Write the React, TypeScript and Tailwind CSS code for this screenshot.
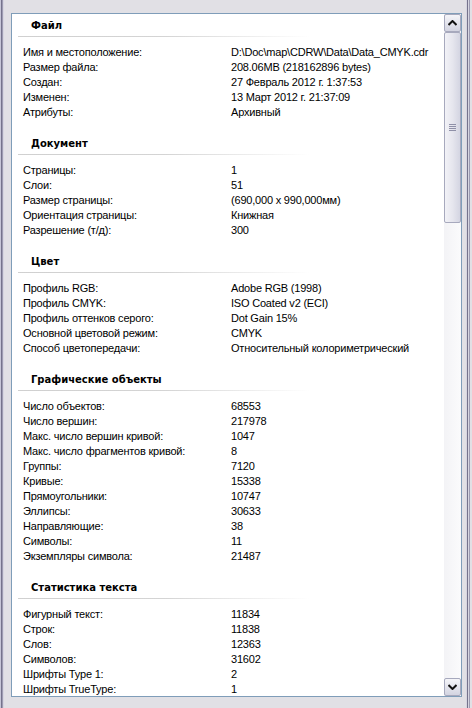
import React from "react";

type Section = { title: string; rows: [string, string][] };

const sections: Section[] = [
  {
    title: "Файл",
    rows: [
      ["Имя и местоположение:", "D:\\Doc\\map\\CDRW\\Data\\Data_CMYK.cdr"],
      ["Размер файла:", "208.06MB (218162896 bytes)"],
      ["Создан:", "27 Февраль 2012 г. 1:37:53"],
      ["Изменен:", "13 Март 2012 г. 21:37:09"],
      ["Атрибуты:", "Архивный"],
    ],
  },
  {
    title: "Документ",
    rows: [
      ["Страницы:", "1"],
      ["Слои:", "51"],
      ["Размер страницы:", "(690,000 x 990,000мм)"],
      ["Ориентация страницы:", "Книжная"],
      ["Разрешение (т/д):", "300"],
    ],
  },
  {
    title: "Цвет",
    rows: [
      ["Профиль RGB:", "Adobe RGB (1998)"],
      ["Профиль CMYK:", "ISO Coated v2 (ECI)"],
      ["Профиль оттенков серого:", "Dot Gain 15%"],
      ["Основной цветовой режим:", "CMYK"],
      ["Способ цветопередачи:", "Относительный колориметрический"],
    ],
  },
  {
    title: "Графические объекты",
    rows: [
      ["Число объектов:", "68553"],
      ["Число вершин:", "217978"],
      ["Макс. число вершин кривой:", "1047"],
      ["Макс. число фрагментов кривой:", "8"],
      ["Группы:", "7120"],
      ["Кривые:", "15338"],
      ["Прямоугольники:", "10747"],
      ["Эллипсы:", "30633"],
      ["Направляющие:", "38"],
      ["Символы:", "11"],
      ["Экземпляры символа:", "21487"],
    ],
  },
  {
    title: "Статистика текста",
    rows: [
      ["Фигурный текст:", "11834"],
      ["Строк:", "11838"],
      ["Слов:", "12363"],
      ["Символов:", "31602"],
      ["Шрифты Type 1:", "2"],
      ["Шрифты TrueType:", "1"],
    ],
  },
];

function Chevron({ up }: { up: boolean }) {
  return (
    <svg width="9" height="6" viewBox="0 0 9 6">
      {up ? (
        <path d="M0.5 5 L4.5 1 L8.5 5" fill="none" stroke="#111" strokeWidth="2" />
      ) : (
        <path d="M0.5 1 L4.5 5 L8.5 1" fill="none" stroke="#111" strokeWidth="2" />
      )}
    </svg>
  );
}

function ScrollButton({ up }: { up: boolean }) {
  return (
    <div className="h-[18px] w-[17px] rounded-[2px] border border-[#a7a9bd] bg-gradient-to-b from-[#f5f5f9] to-[#d3d4e1] flex items-center justify-center">
      <Chevron up={up} />
    </div>
  );
}

function Scrollbar() {
  return (
    <div className="w-[17px] flex flex-col bg-gradient-to-r from-[#f3f3f6] to-[#fbfbfc]">
      <ScrollButton up />
      <div className="h-[191px] rounded-[2px] border border-[#a7a9bd] bg-gradient-to-r from-[#f2f2f7] via-[#e6e6ee] to-[#d4d5e2] flex flex-col items-center justify-center gap-[1px]">
        <div className="h-[1px] w-[7px] bg-[#8f90a8]" />
        <div className="h-[1px] w-[7px] bg-[#8f90a8]" />
        <div className="h-[1px] w-[7px] bg-[#8f90a8]" />
        <div className="h-[1px] w-[7px] bg-[#8f90a8]" />
      </div>
      <div className="flex-1" />
      <ScrollButton up={false} />
    </div>
  );
}

export default function App() {
  return (
    <div
      className="w-[472px] h-[708px] bg-[#e1e0e5] flex overflow-hidden"
      style={{ fontFamily: '"Liberation Sans", Arial, sans-serif' }}
    >
      <div className="w-[4px] flex">
        <div className="w-[1px] bg-[#c6c5d7]" />
        <div className="w-[1px] bg-[#75738c]" />
        <div className="w-[1px] bg-[#9d9bb2]" />
        <div className="w-[1px] bg-[#d6d5e0]" />
      </div>
      <div className="pl-[7px] pt-[13px] pb-[11px]">
        <div className="w-[451px] h-[684px] border border-[#7f9db9] bg-white flex">
          <div className="flex-1 overflow-hidden text-[11px] tracking-[-0.2px] text-black">
            {sections.map((s) => (
              <div key={s.title} className="pt-[4px] pb-[12px]">
                <div
                  className="pl-[19px] h-[15px] leading-[15px] font-bold tracking-normal text-[10px]"
                  style={{ fontFamily: '"DejaVu Sans", Verdana, sans-serif' }}
                >
                  {s.title}
                </div>
                <div className="ml-[6px] mt-[3px] h-[1px] w-[292px] bg-gradient-to-r from-[#d0d0d0] via-[#d4d4d4] to-white" />
                <div className="mt-[8px]">
                  {s.rows.map(([k, v]) => (
                    <div key={k} className="flex h-[15px] leading-[15px] whitespace-nowrap">
                      <div className="w-[219px] pl-[11px] shrink-0">{k}</div>
                      <div>{v}</div>
                    </div>
                  ))}
                </div>
              </div>
            ))}
          </div>
          <Scrollbar />
        </div>
      </div>
      <div className="flex-1" />
      <div className="w-[6px] flex">
        <div className="w-[1px] bg-[#d6d5e0]" />
        <div className="w-[1px] bg-[#75738c]" />
        <div className="w-[1px] bg-[#d6d5e0]" />
        <div className="w-[1px] bg-[#9d9bb2]" />
        <div className="w-[2px] bg-[#e1e0e5]" />
      </div>
    </div>
  );
}
